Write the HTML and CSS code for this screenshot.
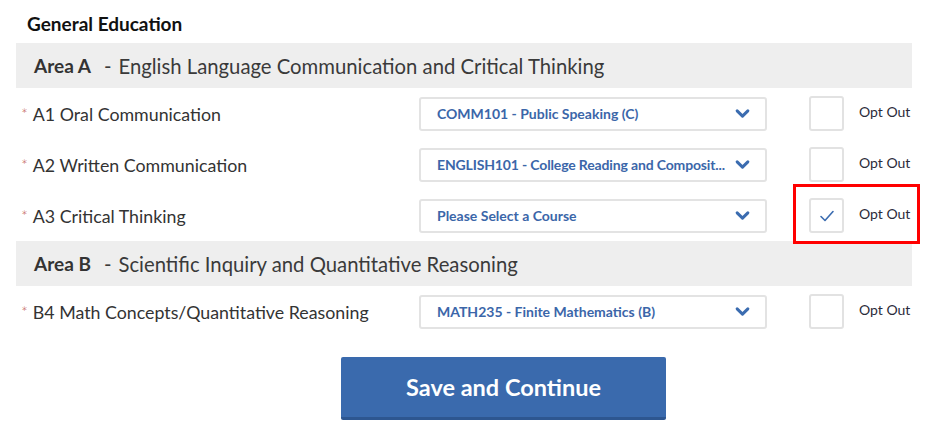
FILE: index.html
```html
<!DOCTYPE html>
<html>
<head>
<meta charset="utf-8">
<link rel="stylesheet" href="styles.css">
</head>
<body>
<div class="page">
  <h2 class="title">General Education</h2>

  <div class="area"><b>Area A</b><span class="dash">-</span>English Language Communication and Critical Thinking</div>

  <div class="row">
    <div class="label"><span class="req">*</span>A1 Oral Communication</div>
    <div class="select"><span class="val">COMM101 - Public Speaking (C)</span><svg class="chev" viewBox="0 0 14 10"><path d="M2 2.5 L7 7.5 L12 2.5" fill="none" stroke="#3b6cb0" stroke-width="2.8" stroke-linecap="round" stroke-linejoin="round"/></svg></div>
    <div class="opt"><span class="box"></span><span class="opttext">Opt Out</span></div>
  </div>

  <div class="row">
    <div class="label"><span class="req">*</span>A2 Written Communication</div>
    <div class="select"><span class="val tight">ENGLISH101 - College Reading and Composit...</span><svg class="chev" viewBox="0 0 14 10"><path d="M2 2.5 L7 7.5 L12 2.5" fill="none" stroke="#3b6cb0" stroke-width="2.8" stroke-linecap="round" stroke-linejoin="round"/></svg></div>
    <div class="opt"><span class="box"></span><span class="opttext">Opt Out</span></div>
  </div>

  <div class="row">
    <div class="label"><span class="req">*</span>A3 Critical Thinking</div>
    <div class="select"><span class="val">Please Select a Course</span><svg class="chev" viewBox="0 0 14 10"><path d="M2 2.5 L7 7.5 L12 2.5" fill="none" stroke="#3b6cb0" stroke-width="2.8" stroke-linecap="round" stroke-linejoin="round"/></svg></div>
    <div class="opt highlighted"><span class="box"><svg class="tick" viewBox="0 0 16 14"><path d="M2 7.5 L6 11.5 L14 2.5" fill="none" stroke="#3b6cb0" stroke-width="1.6" stroke-linecap="round" stroke-linejoin="round"/></svg></span><span class="opttext">Opt Out</span><span class="redbox"></span></div>
  </div>

  <div class="area"><b>Area B</b><span class="dash">-</span>Scientific Inquiry and Quantitative Reasoning</div>

  <div class="row">
    <div class="label"><span class="req">*</span>B4 Math Concepts/Quantitative Reasoning</div>
    <div class="select"><span class="val">MATH235 - Finite Mathematics (B)</span><svg class="chev" viewBox="0 0 14 10"><path d="M2 2.5 L7 7.5 L12 2.5" fill="none" stroke="#3b6cb0" stroke-width="2.8" stroke-linecap="round" stroke-linejoin="round"/></svg></div>
    <div class="opt"><span class="box"></span><span class="opttext">Opt Out</span></div>
  </div>

  <div class="actions">
    <button class="save">Save and Continue</button>
  </div>
</div>
</body>
</html>
```

FILE: styles.css
```css
* { box-sizing: border-box; }
html, body { margin: 0; padding: 0; background: #fff; }
body {
  font-family: Lato, "Open Sans", "Liberation Sans", sans-serif;
  color: #333;
}
.page {
  width: 896px;
  margin-left: 16px;
}
.title {
  margin: 0;
  height: 43px;
  padding: 12px 0 0 11px;
  font-size: 19px;
  font-weight: 700;
  color: #111;
  line-height: 24px;
}
.area {
  height: 45px;
  background: #eeeeee;
  padding-left: 18px;
  display: flex;
  align-items: center;
  font-size: 20.3px;
  color: #3a3a3a;
}
.area b { color: #333; font-weight: 700; font-size: 19px; }
.dash { margin: 0 7px 0 13px; }
.row {
  height: 51px;
  display: flex;
  align-items: center;
  padding-left: 5px;
}
.label {
  width: 398px;
  font-size: 17.8px;
  color: #333;
}
.req {
  color: #c25b52;
  font-size: 16px;
  font-weight: 300;
  margin-right: 5px;
  position: relative;
  top: -1px;
}
.select {
  width: 348px;
  height: 34px;
  border: 2px solid #e3e3e3;
  border-radius: 3px;
  display: flex;
  align-items: center;
  padding: 0 15px 0 16px;
  background: #fff;
}
.val {
  flex: 1;
  min-width: 0;
  white-space: nowrap;
  font-size: 14px;
  font-weight: 700;
  color: #3b66a9;
}
.val.tight { letter-spacing: -0.15px; }
.chev { width: 15px; height: 11px; flex: none; margin-left: 0; }
.opt {
  position: relative;
  display: flex;
  align-items: center;
  margin-left: 42px;
}
.box {
  width: 35px;
  height: 35px;
  border: 2px solid #e2e2e2;
  border-radius: 3px;
  display: flex;
  align-items: center;
  justify-content: center;
  background: #fff;
}
.tick { width: 16px; height: 14px; }
.opttext {
  margin-left: 15px;
  font-size: 14px;
  color: #2b2b3a;
  position: relative;
  top: -2px;
}
.redbox {
  position: absolute;
  left: -16px;
  top: -14px;
  width: 127px;
  height: 60px;
  border: 3px solid #f00;
}
.actions {
  padding: 20px 0 0 325px;
}
.save {
  width: 325px;
  height: 63px;
  background: #3a6aad;
  border: none;
  border-bottom: 3px solid #2d5690;
  border-radius: 2px;
  color: #fff;
  font-family: Lato, "Open Sans", "Liberation Sans", sans-serif;
  font-size: 23.5px;
  font-weight: 700;
  padding: 0;
}
```
